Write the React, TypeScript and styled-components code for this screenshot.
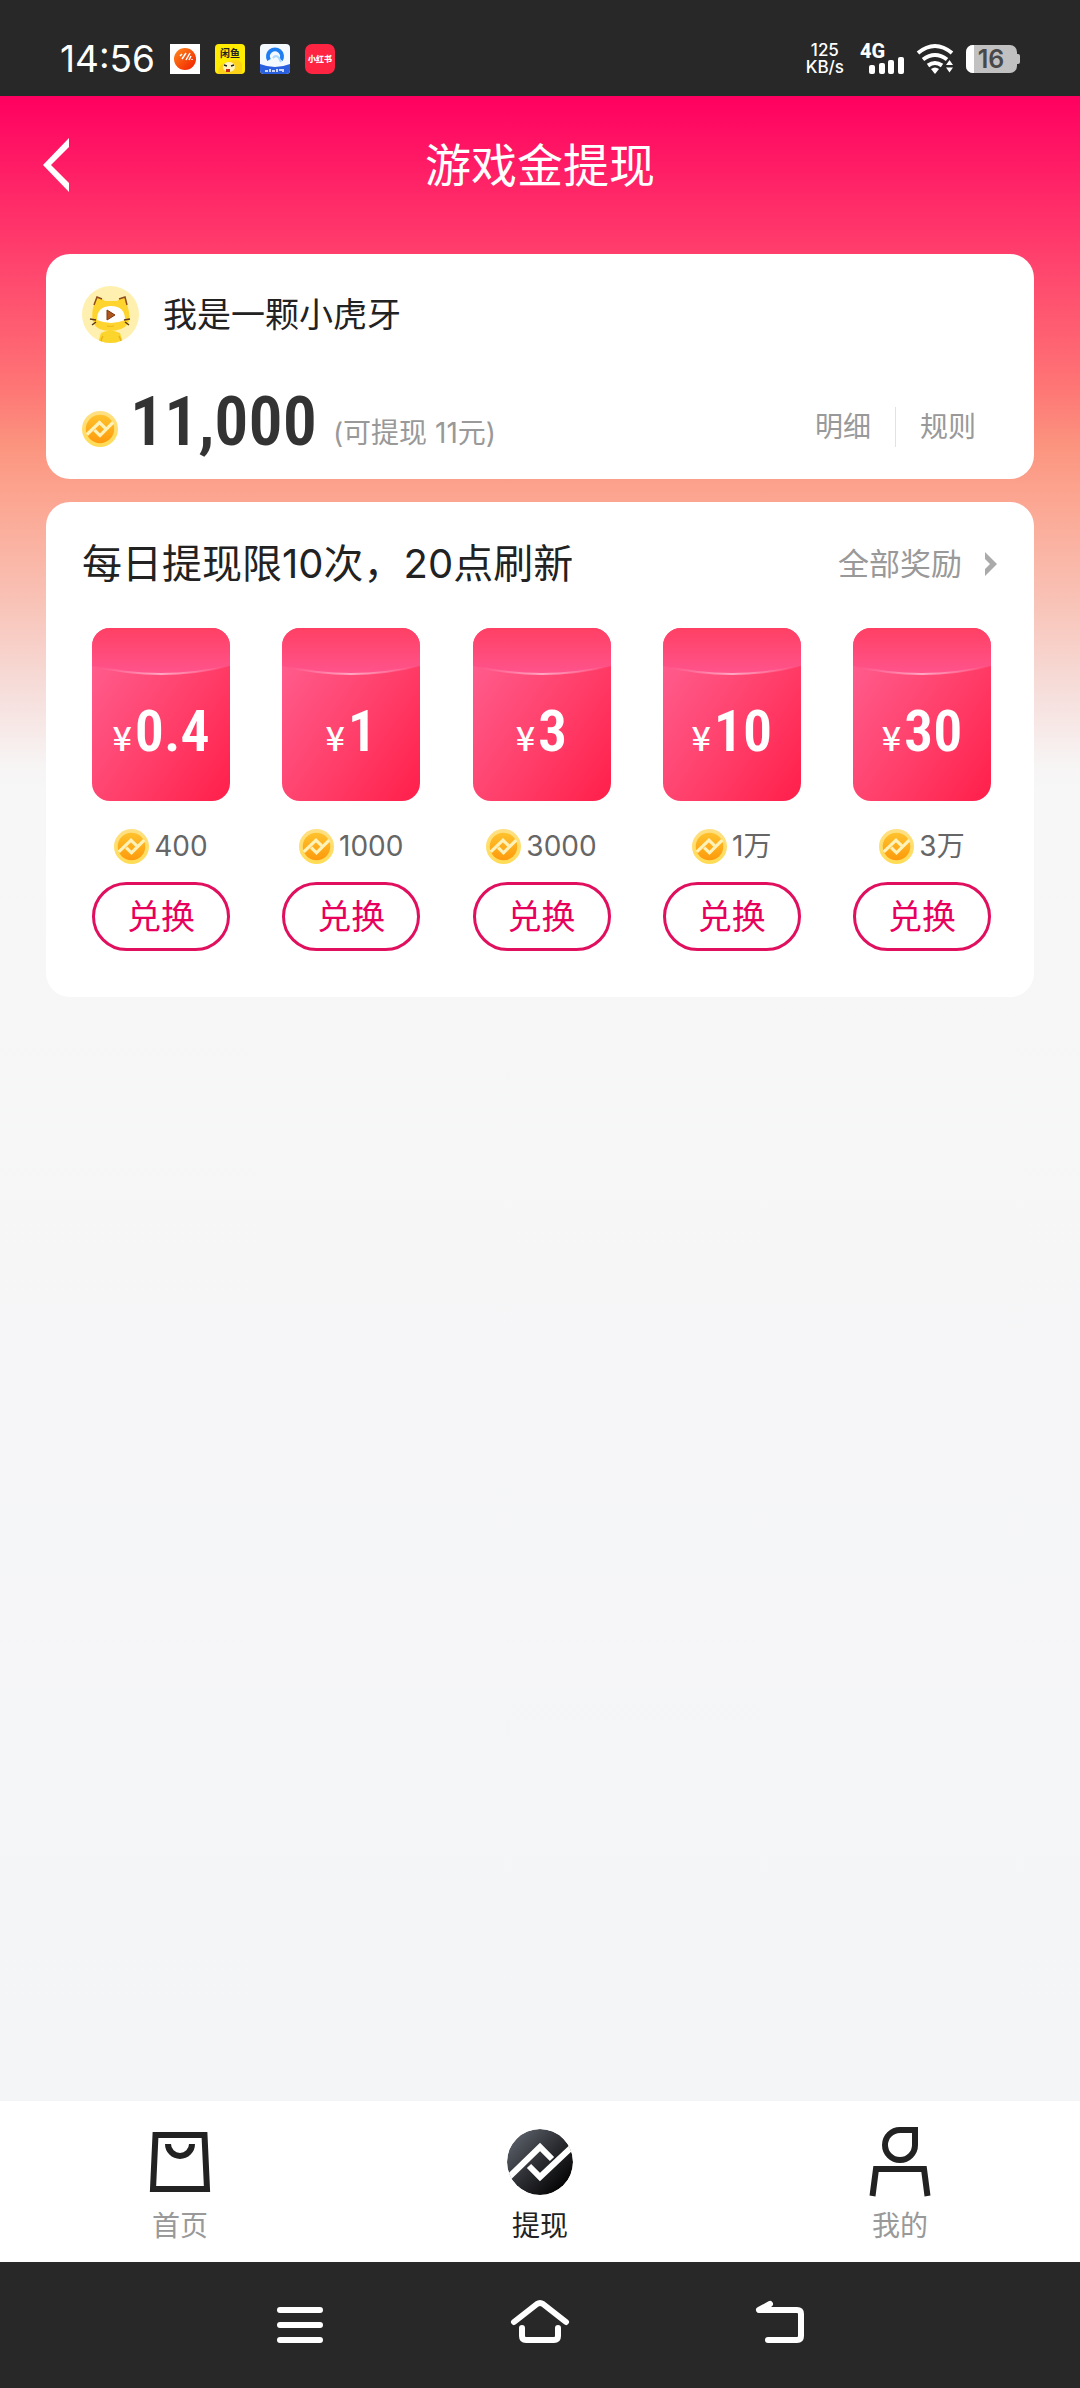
import React from "react";
import styled, { createGlobalStyle } from "styled-components";

const GlobalStyle = createGlobalStyle`
  * { box-sizing: border-box; }
  body {
    margin: 0;
    font-family: Inter, "Noto Sans CJK SC", sans-serif;
    color: #222;
  }
  button {
    margin: 0;
    padding: 0;
    border: 0;
    background: none;
    font: inherit;
    color: inherit;
    cursor: pointer;
  }
  a { color: inherit; text-decoration: none; }
  svg { display: block; flex: none; overflow: visible; }
`;

const digits = `"Roboto Condensed", Roboto, sans-serif`;

const Page = styled.div`
  min-height: 100vh;
  display: flex;
  flex-direction: column;
`;

const StatusBar = styled.header`
  height: 96px;
  padding: 22px 60px 0;
  display: flex;
  align-items: center;
  justify-content: space-between;
  background: #282828;
  color: #fff;
`;

const StatusGroup = styled.div<{ $gap: number }>`
  display: flex;
  align-items: center;
  gap: ${(p) => p.$gap}px;
`;

const Clock = styled.time`
  font-size: 37px;
  line-height: 40px;
  font-weight: 400;
`;

const Speed = styled.div`
  display: flex;
  flex-direction: column;
  align-items: center;
  margin-right: 4px;
  font-size: 17px;
  line-height: 17px;
  font-weight: 500;
`;

const Main = styled.main`
  flex: 1;
  padding: 0 46px 46px;
  background:
    linear-gradient(
      180deg,
      #ff0060 0,
      #ff3e6c 155px,
      #fe7575 290px,
      #fb947f 350px,
      #fca38e 394px,
      #f9bfb2 494px,
      #f6dedb 596px,
      #f7f4f4 668px,
      #f7f7f7 692px,
      #f4f5f7 100%
    );
`;

const TitleBar = styled.div`
  height: 158px;
  display: grid;
  grid-template-columns: 60px 1fr 60px;
  align-items: center;
  padding-bottom: 20px;
  margin: 0 -6px;
  color: #fff;
`;

const Title = styled.h1`
  margin: 0;
  text-align: center;
  font-size: 46px;
  line-height: 60px;
  font-weight: 400;
`;

const Card = styled.section<{ $bottom: number }>`
  padding: 32px 36px ${(p) => p.$bottom}px;
  border-radius: 24px;
  background: #fff;
  & + & {
    margin-top: 23px;
  }
`;

const User = styled.div`
  display: flex;
  align-items: center;
  gap: 24px;
  font-size: 34px;
  line-height: 56px;
`;

const Balance = styled.div`
  display: flex;
  align-items: flex-end;
  margin-top: 44px;
  height: 70px;
`;

const CoinSlot = styled.span`
  padding-bottom: 10px;
`;

const Amount = styled.strong`
  margin-left: 12px;
  font-family: ${digits};
  font-size: 68px;
  line-height: 70px;
  font-weight: 600;
  color: #333;
`;

const Cashable = styled.span`
  margin-left: 16px;
  font-size: 28px;
  line-height: 48px;
  color: #999;
`;

const Links = styled.div`
  margin-left: auto;
  margin-right: 22px;
  display: flex;
  font-size: 28px;
  line-height: 40px;
  padding-bottom: 10px;
  color: #999;
`;

const TextButton = styled.button`
  & + & {
    margin-left: 24px;
    padding-left: 24px;
    border-left: 1px solid #e2e2e2;
  }
`;

const SectionHead = styled.div`
  display: flex;
  align-items: center;
  justify-content: space-between;
  height: 60px;
`;

const SectionTitle = styled.h2`
  margin: 0;
  font-size: 40px;
  line-height: 60px;
  font-weight: 400;
`;

const MoreLink = styled.a`
  display: flex;
  align-items: center;
  gap: 22px;
  font-size: 31px;
  line-height: 40px;
  color: #999;
`;

const Offers = styled.ul`
  list-style: none;
  margin: 34px 7px 0 10px;
  padding: 0;
  display: flex;
  justify-content: space-between;
`;

const Offer = styled.li`
  width: 138px;
  display: flex;
  flex-direction: column;
  align-items: center;
`;

const Packet = styled.div`
  position: relative;
  width: 100%;
  height: 173px;
  border-radius: 18px;
  overflow: hidden;
  display: flex;
  justify-content: center;
  align-items: baseline;
  gap: 3px;
  padding-top: 68px;
  color: #fff;
  background: linear-gradient(125deg, #ff5c8d 10%, #ff406b 55%, #ff1f4a 100%);
`;

const Flap = styled.svg`
  position: absolute;
  inset: 0 0 auto;
  width: 100%;
  height: 48px;
`;

const Currency = styled.span`
  position: relative;
  font-size: 34px;
  line-height: 70px;
  font-weight: 500;
  font-family: "Noto Sans CJK SC", sans-serif;
`;

const Price = styled.span`
  position: relative;
  font-family: ${digits};
  font-size: 58px;
  line-height: 70px;
  font-weight: 600;
`;

const Cost = styled.div`
  display: flex;
  align-items: center;
  gap: 5px;
  margin: 25px 0 16px;
  font-size: 28px;
  line-height: 40px;
  color: #666;
`;

const Redeem = styled.button`
  width: 100%;
  height: 69px;
  border: 3px solid #e0105f;
  border-radius: 35px;
  font-size: 34px;
  line-height: 63px;
  color: #e8005c;
`;

const TabBar = styled.nav`
  height: 161px;
  display: grid;
  grid-template-columns: repeat(3, 1fr);
  background: #fff;
`;

const Tab = styled.a<{ $active?: boolean }>`
  display: flex;
  flex-direction: column;
  align-items: center;
  padding-top: 25px;
  gap: 10px;
  font-size: 28px;
  line-height: 40px;
  color: ${(p) => (p.$active ? "#222" : "#999")};
`;

const SystemNav = styled.nav`
  height: 126px;
  padding: 0 calc(100% / 6) 6px;
  display: grid;
  grid-template-columns: repeat(3, 1fr);
  align-items: center;
  background: #282828;
`;

const SystemButton = styled.button`
  display: flex;
  justify-content: center;
`;

const Coin = ({ size }: { size: number }) => (
  <svg width={size} height={size} viewBox="0 0 66 66" aria-hidden="true">
    <defs>
      <linearGradient id="coinFace" x1="0" y1="0" x2="0" y2="1">
        <stop offset="0" stopColor="#ffc22d" />
        <stop offset="1" stopColor="#fd9a0c" />
      </linearGradient>
      <linearGradient id="coinRim" x1="0" y1="0" x2="0" y2="1">
        <stop offset="0" stopColor="#ffe084" />
        <stop offset="1" stopColor="#ffdc55" />
      </linearGradient>
    </defs>
    <circle cx="33" cy="33" r="33" fill="url(#coinRim)" />
    <circle cx="33" cy="33" r="26" fill="url(#coinFace)" />
    <g fill="none" stroke="#fff2b8" strokeWidth="6">
      <path d="M9 43 32 21 43 32" />
      <path d="M23 35 33 45 57 21" />
    </g>
  </svg>
);

const Avatar = () => (
  <svg width="57" height="57" viewBox="0 0 57 57" role="img" aria-label="头像">
    <defs>
      <clipPath id="avatarClip">
        <circle cx="28.500" cy="28.500" r="28.500" />
      </clipPath>
    </defs>
    <g clipPath="url(#avatarClip)">
      <rect width="57" height="57" fill="#fff0b0" />
      <path d="M19 47q9-5 19 0l3 10H16z" fill="#fbd42c" />
      <path d="M21 50q-2 3-2 7M37 50q2 3 2 7" stroke="#e9b41c" strokeWidth="1.500" fill="none" />
      <path d="M11 22 15 11q5 1 8 4h12q3-3 8-4l3 11q3 9 0 16-6 7-18 7T12 38q-3-7-1-16z" fill="#ffd42e" />
      <path d="M12 19 15 11l5 2M45 19 43 11l-6 2" stroke="#8f4c1c" strokeWidth="1.500" fill="none" />
      <path d="M15 34q0-14 14-14t14 14q-7 3-14 3t-14-3z" fill="#fff" />
      <path d="M25 24 33 29l-8 5z" fill="#b0561d" stroke="#7c3814" strokeLinejoin="round" />
      <path d="m8 33 6 1M10 39l4-3M48 33l-6 1M47 39l-4-3" stroke="#5d371b" strokeWidth="1.500" />
      <path d="M25 40q4 1 7 0" stroke="#e9b41c" fill="none" />
    </g>
  </svg>
);

const PacketFlap = () => (
  <Flap viewBox="0 0 138 48" preserveAspectRatio="none" aria-hidden="true">
    <defs>
      <linearGradient id="flapFill" x1="0" y1="0" x2="0" y2="1">
        <stop offset="0" stopColor="#ff4064" />
        <stop offset="1" stopColor="#ff548c" />
      </linearGradient>
      <linearGradient id="flapEdge" x1="0" y1="0" x2="1" y2="0">
        <stop offset="0.050" stopColor="#ff9dbc" stopOpacity="0" />
        <stop offset="0.500" stopColor="#ffa9c4" />
        <stop offset="0.980" stopColor="#ff9dbc" stopOpacity="0" />
      </linearGradient>
    </defs>
    <path d="M0 0H138V38Q69 54 0 38Z" fill="url(#flapFill)" />
    <path d="M0 38Q69 54 138 38" fill="none" stroke="url(#flapEdge)" strokeWidth="2" />
  </Flap>
);

const AppIcons = () => (
  <>
    <svg width="30" height="30" viewBox="0 0 30 30" aria-hidden="true">
      <defs>
        <linearGradient id="ball" x1="0" y1="0" x2="1" y2="1">
          <stop offset="0" stopColor="#ff8a1c" />
          <stop offset="1" stopColor="#f01c00" />
        </linearGradient>
      </defs>
      <rect width="30" height="30" fill="#fff" />
      <circle cx="15" cy="15" r="11" fill="url(#ball)" />
      <path d="M10 12l2-2M12 15l4-6M16 16l4-7M19 16l2-4M22 16l0-1" stroke="#fff" strokeWidth="1.500" />
    </svg>
    <svg width="30" height="30" viewBox="0 0 30 30" aria-hidden="true">
      <rect width="30" height="30" rx="4" fill="#ffec00" />
      <path d="M3 30q0-10 9-12 12-5 15 2v10z" fill="#ffd21a" />
      <ellipse cx="14" cy="23" rx="6" ry="5" fill="#fff3c0" />
      <path d="M9 21l3 1M19 21l-3 1" stroke="#222" strokeWidth="1.500" />
      <path d="M11 25h4v3h-4z" fill="#c92a12" />
      <text x="15" y="13" textAnchor="middle" fontSize="10" fontWeight="700" fill="#222">闲鱼</text>
    </svg>
    <svg width="30" height="30" viewBox="0 0 30 30" aria-hidden="true">
      <rect width="30" height="30" rx="4" fill="#f4f8ff" />
      <path d="M0 20q15 6 30 0v6q0 4-4 4H4q-4 0-4-4z" fill="#2a5fe0" />
      <path d="M9 16a7 7 0 1 1 12 0" fill="none" stroke="#1f7df2" strokeWidth="4" />
      <path d="M13 14q3-4 6 0l2 4" fill="none" stroke="#a9d7ff" strokeWidth="2" />
      <path d="M5 27h3M10 25v3M12 27h3M17 25v3M19 26h3M23 25v3" stroke="#fff" strokeWidth="1.500" />
    </svg>
    <svg width="30" height="30" viewBox="0 0 30 30" aria-hidden="true">
      <rect width="30" height="30" rx="7" fill="#ff2442" />
      <text x="15" y="18" textAnchor="middle" fontSize="8" fontWeight="900" fill="#fff">小红书</text>
    </svg>
  </>
);

const Signal = () => (
  <svg width="45" height="30" viewBox="0 0 45 30" role="img" aria-label="4G">
    <text x="0" y="14" fontSize="20" fontWeight="800" fill="#fff" fontFamily="Roboto, sans-serif">4G</text>
    <g fill="#fff">
      <rect x="9" y="21" width="6" height="9" rx="2" />
      <rect x="19" y="19" width="6" height="11" rx="2" />
      <rect x="28" y="16" width="6" height="14" rx="2" />
      <rect x="38" y="13" width="6" height="17" rx="2" />
    </g>
  </svg>
);

const Wifi = () => (
  <svg width="37" height="30" viewBox="0 0 37 30" aria-hidden="true">
    <g fill="none" stroke="#fff" strokeWidth="4">
      <path d="M1 9q17-14 34 0" />
      <path d="M6 15.500q12-9 24 0" />
      <path d="M11 21.500q7-5 14 0" />
    </g>
    <path d="M14 25q4-3 8 0l-4 5z" fill="#fff" />
    <path d="M29 21l3.500-5 3.500 5zM29 23.500l3.500 5 3.500-5z" fill="#fff" />
  </svg>
);

const Battery = () => (
  <svg width="54" height="28" viewBox="0 0 54 28" role="img" aria-label="16%">
    <defs>
      <clipPath id="batteryClip">
        <rect width="51" height="28" rx="7" />
      </clipPath>
    </defs>
    <g clipPath="url(#batteryClip)">
      <rect width="51" height="28" fill="#c1c1c1" />
      <rect width="8" height="28" fill="#fff" />
    </g>
    <path d="M51 9h1q2 0 2 2v6q0 2-2 2h-1z" fill="#c1c1c1" />
    <text x="25" y="23" textAnchor="middle" fontSize="25" fontWeight="600" fill="#484848">16</text>
  </svg>
);

const HomeTabIcon = () => (
  <svg width="70" height="70" viewBox="0 0 70 70" aria-hidden="true">
    <g fill="none" stroke="#222" strokeWidth="6">
      <path d="M10.500 9h49l2.500 54H8z" />
      <path d="M23 18a12 12 0 0 0 24 0" />
    </g>
  </svg>
);

const CashTabIcon = () => (
  <svg width="70" height="70" viewBox="-2 -3 70 70" aria-hidden="true">
    <defs>
      <linearGradient id="cashFace" x1="0.100" y1="0.100" x2="0.900" y2="0.900">
        <stop offset="0" stopColor="#5a5f68" />
        <stop offset="0.500" stopColor="#2c2d32" />
        <stop offset="1" stopColor="#000" />
      </linearGradient>
      <clipPath id="cashClip">
        <circle cx="33" cy="33" r="33" />
      </clipPath>
    </defs>
    <g clipPath="url(#cashClip)">
      <circle cx="33" cy="33" r="33" fill="url(#cashFace)" />
      <g fill="none" stroke="#fff" strokeWidth="6">
        <path d="M0 50 33 18 45 30" />
        <path d="M22 37 33 48 66 17" />
      </g>
    </g>
  </svg>
);

const MineTabIcon = () => (
  <svg width="70" height="70" viewBox="0 0 70 70" aria-hidden="true">
    <g fill="none" stroke="#222" strokeWidth="6">
      <path d="M35 4H50V19A15 15 0 1 1 35 4Z" />
      <path d="M7.500 70 11 43H59L62.500 70" />
    </g>
  </svg>
);

const offers = [
  { price: "0.4", cost: "400" },
  { price: "1", cost: "1000" },
  { price: "3", cost: "3000" },
  { price: "10", cost: "1万" },
  { price: "30", cost: "3万" },
];

export default function App() {
  return (
    <Page>
      <GlobalStyle />
      <StatusBar>
        <StatusGroup $gap={15}>
          <Clock>14:56</Clock>
          <AppIcons />
        </StatusGroup>
        <StatusGroup $gap={12}>
          <Speed>
            <span>125</span>
            <span>KB/s</span>
          </Speed>
          <Signal />
          <Wifi />
          <Battery />
        </StatusGroup>
      </StatusBar>

      <Main>
        <TitleBar>
          <button aria-label="返回">
            <svg width="30" height="54" viewBox="0 0 30 54" aria-hidden="true">
              <path d="M29 0V9L11 27 29 45V54L3 27Z" fill="#fff" />
            </svg>
          </button>
          <Title>游戏金提现</Title>
        </TitleBar>

        <Card $bottom={22}>
          <User>
            <Avatar />
            <span>我是一颗小虎牙</span>
          </User>
          <Balance>
            <CoinSlot>
              <Coin size={36} />
            </CoinSlot>
            <Amount>11,000</Amount>
            <Cashable>(可提现 11元)</Cashable>
            <Links>
              <TextButton>明细</TextButton>
              <TextButton>规则</TextButton>
            </Links>
          </Balance>
        </Card>

        <Card $bottom={46}>
          <SectionHead>
            <SectionTitle>每日提现限10次，20点刷新</SectionTitle>
            <MoreLink href="#rewards">
              全部奖励
              <svg width="14" height="24" viewBox="0 0 14 24" aria-hidden="true">
                <path d="M1 0 13 12 1 24V17L6 12 1 7Z" fill="#aaa" />
              </svg>
            </MoreLink>
          </SectionHead>
          <Offers>
            {offers.map((o) => (
              <Offer key={o.price}>
                <Packet>
                  <PacketFlap />
                  <Currency>¥</Currency>
                  <Price>{o.price}</Price>
                </Packet>
                <Cost>
                  <Coin size={35} />
                  {o.cost}
                </Cost>
                <Redeem>兑换</Redeem>
              </Offer>
            ))}
          </Offers>
        </Card>
      </Main>

      <TabBar>
        <Tab href="#home">
          <HomeTabIcon />
          首页
        </Tab>
        <Tab href="#cash" $active>
          <CashTabIcon />
          提现
        </Tab>
        <Tab href="#mine">
          <MineTabIcon />
          我的
        </Tab>
      </TabBar>

      <SystemNav>
        <SystemButton aria-label="菜单">
          <svg width="60" height="46" viewBox="0 0 60 46" fill="none" stroke="#fff" strokeWidth="6" strokeLinecap="round">
            <path d="M10 11H50M10 26H50M10 41H50" />
          </svg>
        </SystemButton>
        <SystemButton aria-label="主屏幕">
          <svg width="60" height="46" viewBox="0 0 60 46" fill="none" stroke="#fff" strokeWidth="6" strokeLinecap="round" strokeLinejoin="round">
            <path d="M4 23 27 5Q30 3 33 5L56 23" />
            <path d="M12 29V37Q12 41 16 41H44Q48 41 48 37V29" />
          </svg>
        </SystemButton>
        <SystemButton aria-label="返回上一页">
          <svg width="60" height="46" viewBox="0 0 60 46" fill="none" stroke="#fff" strokeWidth="6" strokeLinecap="round" strokeLinejoin="round">
            <path d="M20 5 9 11H47Q51 11 51 15V37Q51 41 47 41H18" />
          </svg>
        </SystemButton>
      </SystemNav>
    </Page>
  );
}
